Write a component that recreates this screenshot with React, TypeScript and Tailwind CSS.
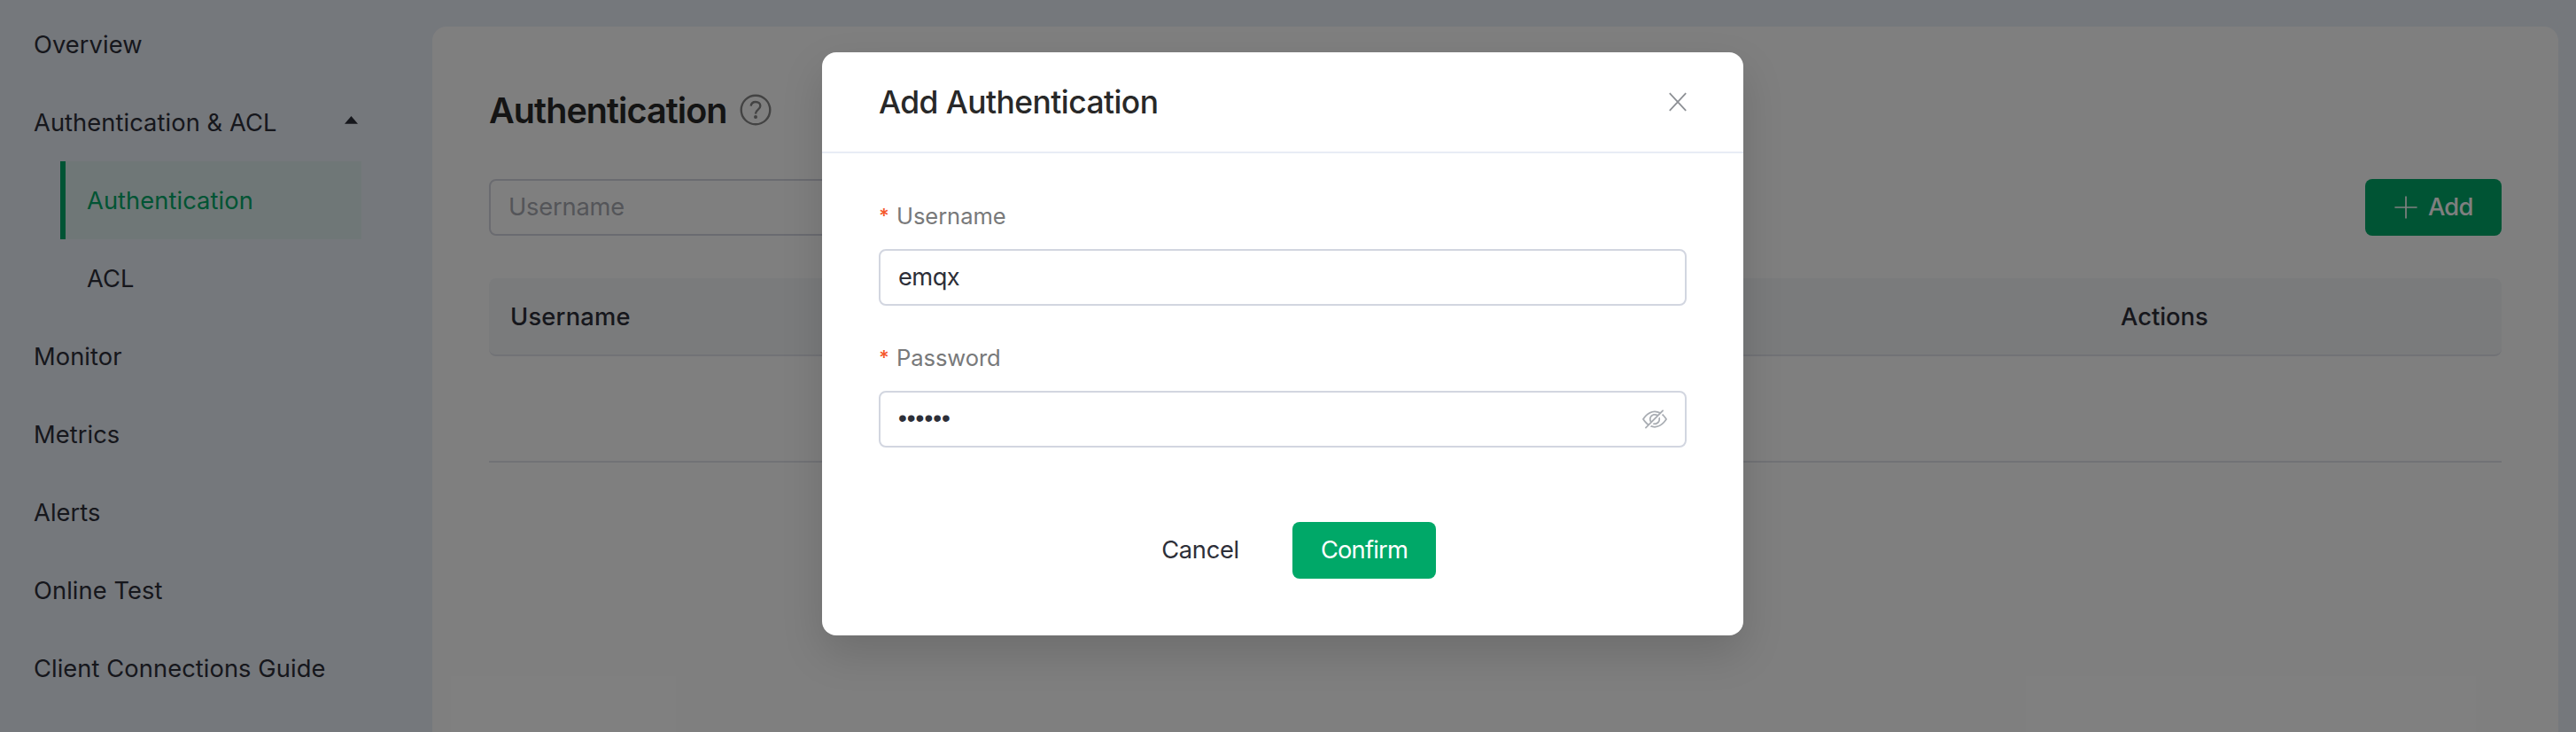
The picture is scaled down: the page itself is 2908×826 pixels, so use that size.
import type { ReactNode } from "react";

function CaretUp() {
  return (
    <svg width="15" height="9" viewBox="0 0 15 9" fill="currentColor" className="-mt-[8px]">
      <path d="M7.5 0 15 8.7H0z" />
    </svg>
  );
}

function QuestionIcon() {
  return (
    <svg width="36" height="36" viewBox="0 0 36 36" fill="none" stroke="#868686" strokeWidth="2.4">
      <circle cx="18" cy="18" r="16.3" />
      <path d="M12.7 13.6c.3-3 2.4-4.6 5.3-4.6 3.1 0 5.3 1.8 5.3 4.5 0 2-1 3.200-2.900 4.600-1.700 1.300-2.300 2.100-2.300 3.700v.6" />
      <circle cx="18" cy="26" r="2" fill="#868686" stroke="none" />
    </svg>
  );
}

function PlusIcon() {
  return (
    <svg width="26" height="26" viewBox="0 0 26 26" fill="none" stroke="currentColor" strokeWidth="1.7">
      <path d="M13 .4v25.200M.4 13h25.200" />
    </svg>
  );
}

function CloseIcon() {
  return (
    <svg width="20" height="22" viewBox="0 0 20 22" fill="none" stroke="#8d9095" strokeWidth="1.8">
      <path d="M.8 1.200 19.200 20.800M19.200 1.200.8 20.800" />
    </svg>
  );
}

function HideIcon() {
  return (
    <svg width="28" height="28" viewBox="0 0 1024 1024" fill="#a9adb3">
      <path d="M876.8 156.8c0-9.6-3.2-16-9.6-22.4-6.4-6.4-12.8-9.6-22.4-9.6-9.6 0-16 3.2-22.4 9.6L736 220.8c-64-32-137.6-51.2-224-60.8-160 16-288 73.6-377.6 176C44.8 438.4 0 496 0 512s48 73.6 134.4 176c22.4 25.6 44.8 48 73.6 67.2l-86.4 89.6c-6.4 6.4-9.6 12.8-9.6 22.4 0 9.6 3.2 16 9.6 22.4 6.4 6.4 12.8 9.6 22.4 9.6 9.6 0 16-3.2 22.4-9.6l704-710.4c3.2-6.4 6.4-12.8 6.4-22.4Zm-646.4 528c-76.8-70.4-128-128-153.6-172.8 28.8-48 80-105.6 153.6-172.8C304 272 400 230.4 512 224c64 3.2 124.8 19.2 176 44.8l-54.4 54.4C598.4 300.8 560 288 512 288c-64 0-115.2 22.4-160 64s-64 96-64 160c0 48 12.8 89.6 35.2 124.8L256 707.2c-9.6-6.4-19.2-16-25.6-22.4Zm140.8-96c-12.8-22.4-19.2-48-19.2-76.8 0-44.8 16-83.2 48-112 32-28.8 67.2-48 112-48 28.8 0 54.4 6.4 73.6 19.2L371.2 588.8ZM889.599 336c-12.8-16-28.8-28.8-41.6-41.6l-48 48c73.6 67.2 124.8 124.8 150.4 169.6-28.8 48-80 105.6-153.6 172.8-73.6 67.2-172.8 108.8-284.8 115.2-51.2-3.2-99.2-12.8-140.8-28.8l-48 48c57.6 22.4 118.4 38.4 188.8 44.8 160-16 288-73.6 377.6-176C979.199 585.6 1024 528 1024 512s-48.001-73.6-134.401-176Z" />
      <path d="M511.998 672c-12.8 0-25.6-3.2-38.4-6.4l-51.2 51.2c28.8 12.8 57.6 19.2 89.6 19.2 64 0 115.2-22.4 160-64 41.6-41.6 64-96 64-160 0-32-6.4-64-19.2-89.6l-51.2 51.2c3.2 12.8 6.4 25.6 6.4 38.4 0 44.8-16 83.2-48 112-32 28.8-67.2 48-112 48Z" />
    </svg>
  );
}

function NavItem({ children }: { children: ReactNode }) {
  return <a className="flex h-[88px] items-center pt-[2px] pl-[38px]">{children}</a>;
}

function Sidebar() {
  return (
    <nav className="w-[488px] shrink-0 pt-[6px] tracking-[0.07px]">
      <NavItem>Overview</NavItem>
      <div className="flex h-[88px] items-center justify-between pt-[2px] pr-[84px] pl-[38px]">
        <span>Authentication &amp; ACL</span>
        <CaretUp />
      </div>
      <div className="mr-[80px] ml-[68px]">
        <a className="flex h-[88px] items-center border-l-[6px] border-[#00a868] bg-[#dfefee] pt-[2px] pl-6 text-[#00a868]">
          Authentication
        </a>
        <a className="flex h-[88px] items-center pt-[2px] pl-[30px]">ACL</a>
      </div>
      <NavItem>Monitor</NavItem>
      <NavItem>Metrics</NavItem>
      <NavItem>Alerts</NavItem>
      <NavItem>Online Test</NavItem>
      <NavItem>Client Connections Guide</NavItem>
    </nav>
  );
}

function AuthenticationPanel() {
  return (
    <main className="mt-[30px] mr-5 h-[796px] flex-1 rounded-t-2xl bg-white px-16 pt-[65px]">
      <div className="flex h-[60px] items-center">
        <h1 className="w-[283px] text-[39.500px] font-semibold tracking-[-0.93px] whitespace-nowrap text-[#282828]">
          Authentication
        </h1>
        <span className="mb-[2px]">
          <QuestionIcon />
        </span>
      </div>
      <div className="mt-[47px] flex justify-between">
        <div className="flex h-16 w-[560px] items-center rounded-lg border-2 border-[#d5d6e0] pl-5 tracking-[-0.2px] text-[#a8abb2]">
          Username
        </div>
        <button className="flex h-16 w-[154px] items-center rounded-lg bg-[#00a868] pl-[33px] text-white">
          <PlusIcon />
          <span className="ml-[12px] font-medium tracking-[-0.8px]">Add</span>
        </button>
      </div>
      <div className="mt-12 flex h-[88px] items-center rounded-lg border-b-2 border-[#e2e4ec] bg-[#f5f6f9] pt-[2px] pl-6 font-medium">
        <span className="w-[1818px] tracking-[0.2px]">Username</span>
        <span>Actions</span>
      </div>
      <div className="h-[120px] border-b-2 border-[#e2e4ec]" />
    </main>
  );
}

function Label({ children }: { children: ReactNode }) {
  return (
    <label className="flex h-10 items-center pt-[2px] text-[25.600px] tracking-[-0.1px] text-[#78797a]">
      <span className="-mt-[2px] w-5 text-[22px] font-semibold text-[#f5592b]">*</span>
      {children}
    </label>
  );
}

function AddDialog() {
  return (
    <section className="mt-[59px] h-[658px] w-[1040px] rounded-2xl bg-white shadow-[0_20px_48px_rgba(0,0,0,0.14)]">
      <header className="flex h-[114px] items-center justify-between border-b-2 border-[#e8ecf5] px-16">
        <h2 className="pt-[2px] text-[35.400px] font-medium tracking-[-0.55px] text-[#282828]">Add Authentication</h2>
        <CloseIcon />
      </header>
      <div className="px-16 pt-[50px]">
        <Label>Username</Label>
        <div className="mt-[18px] flex h-16 items-center rounded-lg border-2 border-[#d2d6e0] px-5 tracking-[-0.6px]">
          emqx
        </div>
        <div className="mt-[38px]">
          <Label>Password</Label>
        </div>
        <div className="mt-[18px] flex h-16 items-center justify-between rounded-lg border-2 border-[#d2d6e0] px-5">
          <span className="pb-[2px] font-['Liberation_Sans',sans-serif] text-[28px]">••••••</span>
          <HideIcon />
        </div>
      </div>
      <footer className="mt-[84px] flex justify-center gap-6">
        <button className="h-16 w-40 tracking-[-0.3px]">Cancel</button>
        <button className="h-16 w-[162px] rounded-lg bg-[#00a868] tracking-[-0.8px] text-white">Confirm</button>
      </footer>
    </section>
  );
}

export default function App() {
  return (
    <div className="relative flex h-[826px] w-[2908px] overflow-hidden bg-[#ebf0f8] font-['Inter',sans-serif] text-[27.300px] leading-[40px] text-[#2d2f38]">
      <Sidebar />
      <AuthenticationPanel />
      <div className="absolute inset-0 flex items-start justify-center bg-black/50 pr-[12px]">
        <AddDialog />
      </div>
    </div>
  );
}
